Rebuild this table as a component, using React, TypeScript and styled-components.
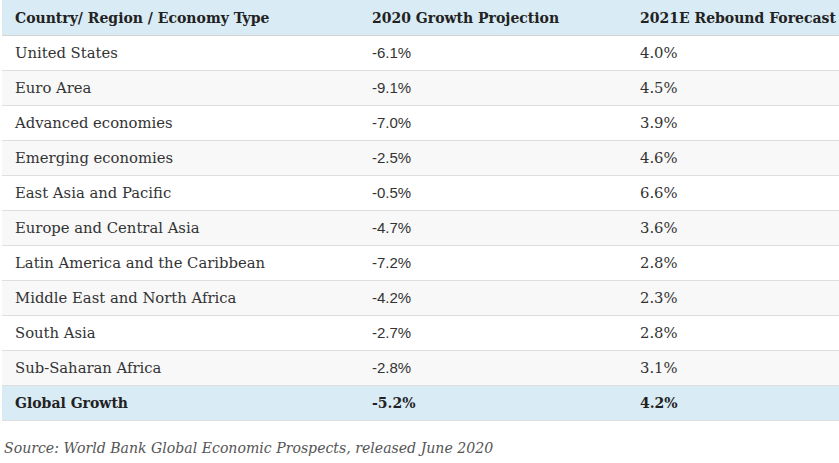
import React from 'react';
import styled, { createGlobalStyle } from 'styled-components';

const GlobalStyle = createGlobalStyle`
  html, body {
    margin: 0;
    padding: 0;
    background: #ffffff;
    overflow: hidden;
  }
  body {
    font-family: "DejaVu Serif", "Liberation Serif", serif;
    color: #333;
  }
`;

const Page = styled.div`
  padding: 0 0 0 2px;
  width: 837px;
`;

const Table = styled.table`
  width: 100%;
  border-collapse: collapse;
  table-layout: fixed;
  font-size: 14px;
`;

const HeadCell = styled.th`
  background: #d9ebf5;
  color: #222;
  font-weight: bold;
  text-align: left;
  white-space: nowrap;
  height: 35px;
  padding: 0 13px;
  border-bottom: 1px solid #d3d3d3;
`;

const Row = styled.tr<{ $striped?: boolean; $total?: boolean }>`
  background: ${p => (p.$total ? '#d9ebf5' : p.$striped ? '#f8f8f8' : '#ffffff')};
`;

const Cell = styled.td<{ $sans?: boolean; $bold?: boolean }>`
  height: 34px;
  padding: 0 13px;
  line-height: 1.2;
  border-bottom: 1px solid #dedede;
  font-family: ${p => (p.$sans ? '"Liberation Sans", Arial, sans-serif' : 'inherit')};
  font-size: ${p => (p.$sans ? '15px' : p.$bold ? '14px' : '14.8px')};
  font-weight: ${p => (p.$bold ? 'bold' : 'normal')};
  color: ${p => (p.$bold ? '#222' : '#333')};
`;

const Source = styled.p`
  margin: 19px 0 0 2px;
  font-style: italic;
  font-size: 14.1px;
  color: #555;
`;

const rows: [string, string, string][] = [
  ['United States', '-6.1%', '4.0%'],
  ['Euro Area', '-9.1%', '4.5%'],
  ['Advanced economies', '-7.0%', '3.9%'],
  ['Emerging economies', '-2.5%', '4.6%'],
  ['East Asia and Pacific', '-0.5%', '6.6%'],
  ['Europe and Central Asia', '-4.7%', '3.6%'],
  ['Latin America and the Caribbean', '-7.2%', '2.8%'],
  ['Middle East and North Africa', '-4.2%', '2.3%'],
  ['South Asia', '-2.7%', '2.8%'],
  ['Sub-Saharan Africa', '-2.8%', '3.1%'],
];

export default function App() {
  return (
    <>
      <GlobalStyle />
      <Page>
        <Table>
          <colgroup>
            <col style={{ width: 357 }} />
            <col style={{ width: 268 }} />
            <col />
          </colgroup>
          <thead>
            <tr>
              <HeadCell>Country/ Region / Economy Type</HeadCell>
              <HeadCell>2020 Growth Projection</HeadCell>
              <HeadCell>2021E Rebound Forecast</HeadCell>
            </tr>
          </thead>
          <tbody>
            {rows.map(([name, proj, rebound], i) => (
              <Row key={name} $striped={i % 2 === 1}>
                <Cell>{name}</Cell>
                <Cell $sans>{proj}</Cell>
                <Cell>{rebound}</Cell>
              </Row>
            ))}
            <Row $total>
              <Cell $bold>Global Growth</Cell>
              <Cell $bold>-5.2%</Cell>
              <Cell $bold>4.2%</Cell>
            </Row>
          </tbody>
        </Table>
        <Source>Source: World Bank Global Economic Prospects, released June 2020</Source>
      </Page>
    </>
  );
}
